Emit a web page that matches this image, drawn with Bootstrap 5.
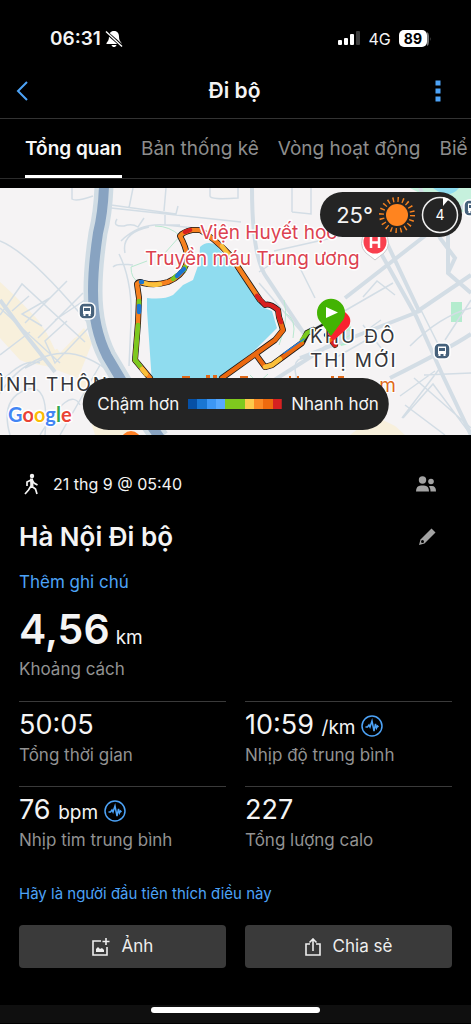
<!DOCTYPE html>
<html lang="vi">
<head>
<meta charset="utf-8">
<meta name="viewport" content="width=device-width, initial-scale=1">
<title>Đi bộ</title>
<link rel="stylesheet" href="https://cdn.jsdelivr.net/npm/bootstrap@5.3.0/dist/css/bootstrap.min.css">
<style>
  body { background: #000; color: #f4f4f4; font-family: Inter, "Noto Sans", sans-serif; font-size: 16px; line-height: 24px; }
  a { color: #4da3f7; text-decoration: none; }
  .status { height: 64px; padding: 13px 40px 0 50px; font-size: 19px; }
  .network { font-size: 16px; }
  .level { font-size: 14px; line-height: 17px; background: #fff; color: #000; border-radius: 5px; padding: 0 5px; }
  .topbar { height: 55px; padding: 0 22px 0 16px; border-bottom: 1px solid #333; }
  .topbar h1 { font-size: 21px; line-height: 28px; }
  .side { flex: 1 1 0; }
  .tabs { height: 60px; padding-left: 25px; gap: 19px; border-bottom: 1px solid #2b2b2b; overflow: hidden; font-size: 19px; }
  .tabs .nav-link { color: #8d8d8d; padding: 2px 0 0; line-height: 56px; white-space: nowrap; }
  .tabs .nav-link.active { color: #f8f8f8; font-weight: 600; border-bottom: 3px solid #fff; }
  .map { margin-top: 9px; }
  .map svg.chart { display: block; width: 100%; }
  .weather { top: 4px; right: 9px; height: 45px; padding: 0 3px 0 16px; gap: 6px; background: #242424; font-size: 22px; }
  .legend { bottom: 5px; left: 50%; transform: translateX(-50%); height: 52px; padding: 0 10px 0 15px; gap: 9px; background: #242424; font-size: 17px; white-space: nowrap; }
  .info { padding: 37px 19px 0; }
  .info h2 { font-size: 26px; line-height: 34px; }
  .distance { gap: 6px; }
  .big { font-size: 41px; line-height: 47px; font-weight: 600; }
  .unit { font-size: 19px; }
  .note { color: #929292; font-size: 17px; }
  .link-note { font-size: 17px; }
  .link-like { display: block; font-size: 15px; line-height: 22px; }
  .stats { display: grid; grid-template-columns: 1fr 1fr; column-gap: 19px; }
  .stat { border-top: 1px solid #3a3a3a; height: 85px; padding-top: 7px; }
  .val { height: 34px; font-size: 27px; line-height: 32px; gap: 6px; }
  .act { background: #3a3a3a; color: #eee; border: 0; border-radius: 4px; height: 43px; font-size: 17px; gap: 12px; }
  .act:hover { background: #484848; color: #fff; }
  .homebar { background: #0f0f0f; height: 18px; margin-top: 37px; padding-top: 2px; }
  .homebar span { width: 36%; height: 6px; background: #fff; }
  .bare { background: none; border: 0; padding: 0; display: flex; color: #a3a3a3; }
</style>
</head>
<body>
<div class="status d-flex align-items-center justify-content-between">
  <div class="d-flex align-items-center gap-1 fw-semibold"><span>06:31</span>
    <svg width="18" height="18" viewBox="0 0 18 18"><path fill="#fff" d="M9 1c3.600 0 5 2.500 5 5.500 0 3 .8 4.500 2.500 6.500v1H1.500v-1C3.200 11 4 9.500 4 6.500 4 3.500 5.400 1 9 1zM6.500 15h5c-.5 1.500-1.400 2-2.500 2s-2-.5-2.500-2z"/><path stroke="#000" stroke-width="3" d="M1 2l16 14"/><path stroke="#fff" stroke-width="1.400" d="M1 1.500l16 15"/></svg>
  </div>
  <div class="d-flex align-items-center gap-2">
    <svg width="23" height="15" viewBox="0 0 23 15"><g fill="#fff"><rect y="9" width="4" height="5" rx="1"/><rect x="6" y="7" width="4" height="7" rx="1"/><rect x="12" y="3" width="4" height="11" rx="1"/></g><rect x="18" y="0" width="4" height="14" rx="1" fill="#3c3c3c"/></svg>
    <span class="network">4G</span>
    <span class="d-flex align-items-center"><span class="level fw-bold">89</span><svg width="4" height="16" viewBox="0 0 4 16"><path d="M0 1q2 1 2 4v6q0 3-2 4zM3 6q1 2 0 4z" fill="#777"/></svg></span>
  </div>
</div>

<header class="topbar d-flex align-items-center">
  <div class="side"><a href="#" aria-label="Quay lại" class="d-flex"><svg width="12" height="20" viewBox="0 0 12 20"><path d="M11 1L2 10l9 9" fill="none" stroke="#4da3f7" stroke-width="2"/></svg></a></div>
  <h1 class="m-0 ps-1 fw-semibold">Đi bộ</h1>
  <div class="side d-flex justify-content-end"><button class="bare px-2" aria-label="Thêm"><svg width="6" height="22" viewBox="0 0 6 22" fill="#4da3f7"><path d="M.500.500h5v5h-5zM.500 8.500h5v5h-5zM.500 16.500h5v5h-5z"/></svg></button></div>
</header>

<nav class="tabs nav flex-nowrap">
  <a class="nav-link active" href="#">Tổng quan</a>
  <a class="nav-link" href="#">Bản thống kê</a>
  <a class="nav-link" href="#">Vòng hoạt động</a>
  <a class="nav-link" href="#">Biể</a>
</nav>

<main>
<section class="map position-relative">
  <svg class="chart" viewBox="0 0 471 247">
    <defs>
      <g id="stop"><rect x="-8" y="-8" width="16" height="16" rx="5" fill="#46617b" stroke="#fff" stroke-width="1.500"/><path d="M-4-4.500h8v7.500h-8zM-3.500 3h2v2h-2zM1.500 3h2v2h-2z" fill="#fff"/><path d="M-3-3h6v3h-6z" fill="#46617b"/></g>
    </defs>
    <rect width="471" height="247" fill="#f5f3f4"/>
    <path d="M0 94L14 107 38 132 60 165 84 140 92 155 80 185 112 215 130 247H95L78 190 46 178 0 170z" fill="#f8f0dc"/>
    <path d="M0 150L20 172 50 184 70 210 88 247H0zM30 110L68 133 78 148 55 162z" fill="#f5f3f4"/>
    <path d="M375 228L395 238 405 247H350z" fill="#f8f0dc"/>
    <path d="M410 0h61v27q-30-10-61-27z" fill="#c6f1dd"/><path d="M433 0h26q-10 12-26 0z" fill="#8fdcef"/>
    <path d="M451 114h11v20h-11zM337 150l14-12-2 18-8 2z" fill="#b4ecce"/>
    <g fill="none" stroke="#d3dde5" stroke-width="1.500">
      <path d="M72 0v11q4 3 21-3M111 17l65 9 2-8M129 20l4-20M164 23l2-23M111 20l130 14M210 0v8q0 4 28 2V0M0 53q30 12 88 82M0 127l22-31 63 58M12 123l17-15M25 135l42-42M38 150l45-45M55 132l30-20M117 31q-5 8 7 7 8-3 14 1l6-9M121 53q18-18 44-16l40 4M165 27v10h15M125 65q-4-20 24-26M119 66q14 28 12 70M113 79q4-4 20-2M131 134l-2 44M0 167l30-23M0 205q20-30 50-38t64 20M10 247q-10-35 15-45t20 45M40 247q30-50 40-30M60 247l40-70M25 180l20-10M5 190q20-20 35-15M0 120l60 55M50 110l-28 16 20 12M67 133l-22 20 10 22 40-42"/>
      <path d="M259 84l18-12M292 24V0M311 0v26l-19-2M295 70l20 40M274 63l80-18M259 95l45 52M360 147l21-15M363 137l22 28M395 107l-18-14-14 16M410 158q30-30 61-38M403 230l30-34 38 51M414 190l57 50M440 180l-38 50M405 217l40 30M424 187l47-2M400 208l35-25M445 152l26-40M421 122l18 36M393 95l-78 45M335 170l35-20M300 200q-12-30 5-30"/>
    </g>
    <g fill="none" stroke="#d3dde5" stroke-width="4">
      <path d="M252 0q0 70 15 90l40 60M345 110l126-98M378 60l38 68 27 60 28 59M385 51l35 74M415 125l56-38M300 170l115-45M420 0l20 50 15 20-7 15M448 45v40l23 20M0 112l25 34 30 38M390 190q60-30 81-44M230 220l120-76"/>
    </g>
    <path d="M155 38q15 0 25 10l-16 18M131 79l16-6M131 79q0 12 8 15M284 112q5 20-5 45M285 125q12 5 8 25M250 187l8 8 10-9" fill="none" stroke="#b9e8d0"/>
    <path d="M104-2Q103 25 98 45 93 78 93 103 93 140 107 168L135 215 160 250" fill="none" stroke="#d0dce4" stroke-width="19"/>
    <path d="M104-2Q103 25 98 45 93 78 93 103 93 140 107 168L135 215 160 250" fill="none" stroke="#88a3c1" stroke-width="10"/>
    <path d="M200 59Q207 52 216 57L240 87 262 119 272 123 277 140 255 162 215 195H152L147 122V110Q164 112 173 107L183 97 193 92 199 75z" fill="#8fdcef"/>

    <g fill="none" stroke-linejoin="round" stroke-linecap="round">
      <g stroke="#171717" stroke-width="6"><path d="M150 190L135 172 136 160 138 135 139 110 137 96Q139 93 143 95 155 98 168 94 182 88 186 77 190 66 180 48 183 44 192 42L200 42Q214 50 230 67L260 112 265 117Q270 115 278 122L279 129 283 142 275 152 222 190M257 168L265 179 272 177 302 155 307 145 313 142M327 147L335 157"/></g>
      <path d="M313 142L324 136" stroke="#222" stroke-width="2"/>
      <g stroke-width="4.500" stroke="#f6811f">
        <path d="M150 190L135 172 136 160 138 135 139 110 137 96Q139 93 143 95 155 98 168 94 182 88 186 77 190 66 180 48 183 44 192 42L200 42Q214 50 230 67L260 112"/>
        <path stroke="#eb6910" d="M278 122L279 129 283 142 275 152 222 190M257 168L265 179 272 177 302 155M329 149L335 157"/>
        <path stroke="#7bc91f" d="M138 137L135 172 140 178M139 117v-4M173 91l3-3M184 82l1-3M302 152L307 145 313 142"/>
        <path stroke="#fac03b" d="M144 95Q152 98 160 96M142 181l4 5M222 58L235 76M265 179L272 177 280 171"/>
        <path stroke="#1976d2" d="M139 124v-6M141 94h1M177 88L184 81"/>
        <path stroke="#d8201f" d="M185 44l5-2M257 108L265 117Q270 115 278 122L279 129 281 134M333 155L335 157"/>
        <path stroke="#2b7ed8" stroke-width="1.500" d="M284 165L304 151"/>
      </g>
    </g>

    <use href="#stop" x="87" y="123"/><use href="#stop" x="442" y="163"/><use href="#stop" x="472" y="20"/>
    <path d="M375 72q-5-4-9-7a13.500 13.500 0 1 1 18 0q-4 3-9 7z" fill="#fff" stroke="#c9c9cc"/><circle cx="375" cy="54" r="11.500" fill="#f9404f"/><path d="M371 49v11M379 49v11M371 54.500h8" stroke="#fff" stroke-width="2.500"/>

    <g font-size="19" fill="#dc4250" stroke="#fff" stroke-width="3" paint-order="stroke" stroke-linejoin="round">
      <text x="200" y="51">Viện Huyết học</text><text x="145" y="77">Truyền máu Trung ương</text>
    </g>
    <g font-size="19" fill="#35373b" stroke="#fff" stroke-width="3" paint-order="stroke" stroke-linejoin="round" letter-spacing="2">
      <text x="310" y="155">KHU ĐÔ</text><text x="310" y="179">THỊ MỚI</text><text x="-1" y="203">ÌNH THÔN</text>
    </g>
    <text x="396" y="204" text-anchor="end" font-size="19" fill="#e0691a" stroke="#fff" stroke-width="2" paint-order="stroke">m</text>
    <path d="M182 190v-2h8v2zM206 190v-3h4v3zM213 190v-3h4v3zM240 190v-2h8v2zM289 190v-2h2v2zM297 190v-2h2v2zM331 190v-2h3v2zM338 190v-2h6v2z" fill="#e0691a"/>
    <path d="M333 153l-5-7 12-25q14 7 9 17-2 3-16 15z" fill="#f9232f"/>
    <path d="M331 148L320.500 134a14 14 0 1 1 21 0z" fill="#43b303"/><path d="M326 119l12 5.500-12 5.500z" fill="#fff"/>
    <circle cx="131" cy="253" r="10" fill="#ff8126"/>
    <text x="8" y="234" font-size="20" font-family="Lato, sans-serif" font-weight="700" stroke="#fff" stroke-width="3" paint-order="stroke"><tspan fill="#4285f4">G</tspan><tspan fill="#ea4335">o</tspan><tspan fill="#fbbc05">o</tspan><tspan fill="#4285f4">g</tspan><tspan fill="#34a853">l</tspan><tspan fill="#ea4335">e</tspan></text>
  </svg>

  <div class="weather position-absolute rounded-pill d-flex align-items-center">
    <span>25°</span>
    <svg width="36" height="36" viewBox="-18 -18 36 36"><circle r="15.500" fill="none" stroke="#f58220" stroke-width="5" stroke-dasharray="1.400 3.470"/><circle r="12.500" fill="#242424"/><circle r="11" fill="#ff841f"/></svg>
    <svg width="38" height="38" viewBox="-19 -19 38 38"><circle r="17.500" fill="none" stroke="#eee" stroke-width="1.500"/><path d="M3-18l6 2-6 7z" fill="#fff"/><text y="5" font-size="14" fill="#fff" text-anchor="middle">4</text></svg>
  </div>

  <div class="legend position-absolute rounded-pill d-flex align-items-center">
    <span>Chậm hơn</span>
    <svg width="94" height="10" viewBox="0 0 94 10" shape-rendering="crispEdges"><path fill="#0650a5" d="M0 0h10v10H0z"/><path fill="#1976d2" d="M9 0h10v10H9z"/><path fill="#3c97f5" d="M19 0h10v10H19z"/><path fill="#57a9ff" d="M28 0h10v10H28z"/><path fill="#7fc91e" d="M37 0h20v10H37z"/><path fill="#fdca4b" d="M57 0h10v10H57z"/><path fill="#fb8b25" d="M66 0h10v10H66z"/><path fill="#ee6a0e" d="M75 0h10v10H75z"/><path fill="#d62121" d="M85 0h9v10h-9z"/></svg>
    <span>Nhanh hơn</span>
  </div>
</section>

<section class="info">
  <div class="d-flex align-items-center justify-content-between mb-4">
    <div class="d-flex align-items-center gap-2">
      <svg width="26" height="22" viewBox="0 0 26 22"><circle cx="13" cy="3" r="2.200" fill="#f4f4f4"/><path d="M12.500 7v6l4 3 1.500 5M12 13l-2.500 4L6 21M12 7L8 9v4M13 7l2 3 3.500 2" fill="none" stroke="#f4f4f4" stroke-width="1.700"/><path d="M11 5.500h3l.5 7.500-3 1z" fill="#f4f4f4"/></svg>
      <span>21 thg 9 @ 05:40</span>
    </div>
    <button class="bare me-3" aria-label="Bạn bè"><svg width="20" height="16" viewBox="0 0 20 16" fill="#a3a3a3"><circle cx="6.500" cy="4" r="3.700"/><path d="M0 15.500Q0 9.500 5 9.500h3q5 0 5 6z"/><circle cx="15" cy="5.500" r="2.800"/><path d="M13 10h3q4 0 4 5.500h-5.500q0-3-1.500-5.500z"/></svg></button>
  </div>
  <div class="d-flex align-items-center justify-content-between">
    <h2 class="m-0 fw-semibold">Hà Nội Đi bộ</h2>
    <button class="bare me-3" aria-label="Sửa"><svg width="18" height="18" viewBox="0 0 18 18"><path d="M13.500 .5l4 4L6.500 15.500l-5.500 1.500 1.500-5.500z" fill="#a3a3a3"/><circle cx="4.500" cy="13.500" r="1.500" fill="#000"/></svg></button>
  </div>
  <div class="mt-3"><a href="#" class="link-note">Thêm ghi chú</a></div>
  <div class="distance mt-2 pt-1 d-flex align-items-baseline"><span class="big">4,56</span><span class="unit">km</span></div>
  <div class="note mt-1 mb-3 pb-1">Khoảng cách</div>
  <div class="stats">
    <div class="stat"><div class="val">50:05</div><div class="note">Tổng thời gian</div></div>
    <div class="stat"><div class="val d-flex align-items-center"><span>10:59 <span class="unit">/km</span></span><svg width="22" height="22" viewBox="0 0 22 22" fill="none" stroke="#4da3f7"><circle cx="11" cy="11" r="10" stroke-width="1.500"/><path d="M4.500 12h2l1.500-2 1 2 2-6 2 10 1.500-7 1 4 1-2 1 1" stroke-width="1.500"/></svg></div><div class="note">Nhịp độ trung bình</div></div>
    <div class="stat"><div class="val d-flex align-items-center"><span>76 <span class="unit">bpm</span></span><svg width="22" height="22" viewBox="0 0 22 22" fill="none" stroke="#4da3f7"><circle cx="11" cy="11" r="10" stroke-width="1.500"/><path d="M4.500 12h2l1.500-2 1 2 2-6 2 10 1.500-7 1 4 1-2 1 1" stroke-width="1.500"/></svg></div><div class="note">Nhịp tim trung bình</div></div>
    <div class="stat"><div class="val">227</div><div class="note">Tổng lượng calo</div></div>
  </div>
  <div class="mt-2 pt-1"><a href="#" class="link-like">Hãy là người đầu tiên thích điều này</a></div>
  <div class="stats mt-3 pt-1">
    <button class="act btn d-flex align-items-center justify-content-center"><svg width="18" height="18" viewBox="0 0 18 18" fill="none" stroke="#eee" stroke-width="1.600"><path d="M9 3H1v14h14V9M14 0v7M10.500 3.500h7"/><path d="M4 14v-3l2-2 2 2 2-1 2 2v2z" fill="#eee" stroke="none"/></svg>Ảnh</button>
    <button class="act btn d-flex align-items-center justify-content-center"><svg width="16" height="18" viewBox="0 0 16 18" fill="none" stroke="#eee" stroke-width="1.600"><path d="M5 6H1v11h14V6h-4M8 13V1M4.500 4.500L8 1l3.500 3.500"/></svg>Chia sẻ</button>
  </div>
</section>
</main>
<div class="homebar"><span class="d-block mx-auto rounded-pill"></span></div>
<script src="https://cdn.jsdelivr.net/npm/bootstrap@5.3.0/dist/js/bootstrap.bundle.min.js"></script>
</body>
</html>
